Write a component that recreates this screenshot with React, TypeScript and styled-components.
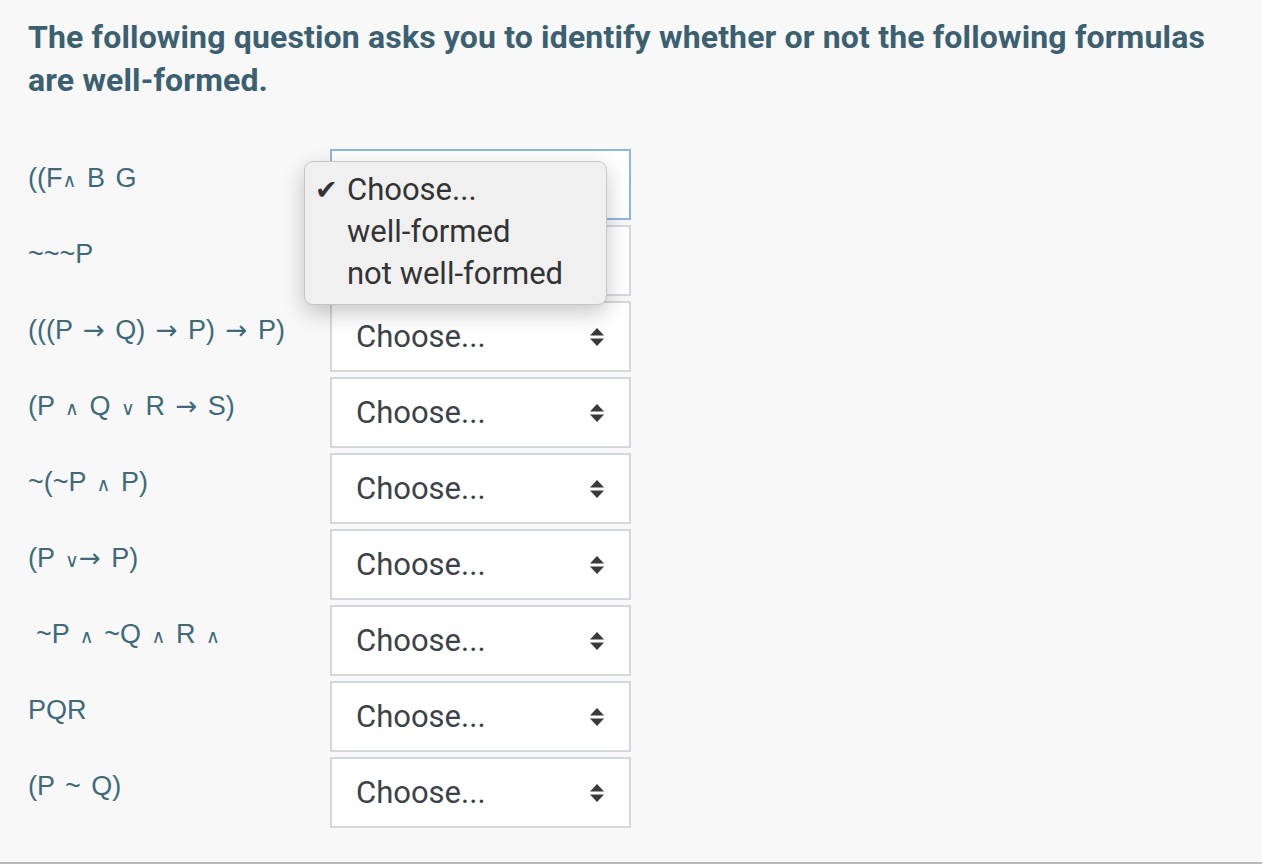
import React from "react";
import styled, { createGlobalStyle } from "styled-components";

const Global = createGlobalStyle`
  html, body { margin: 0; padding: 0; }
  body {
    background: #f8f8f8;
    font-family: Roboto, "Liberation Sans", Arial, sans-serif;
    width: 1262px;
    height: 864px;
    overflow: hidden;
  }
`;

const Page = styled.div`
  box-sizing: border-box;
  width: 1262px;
  height: 864px;
  padding: 16px 28px 0;
  border-bottom: 2px solid #b8b8b8;
  position: relative;
`;

const Heading = styled.h1`
  margin: 0 0 47px;
  font-size: 32px;
  line-height: 43px;
  font-weight: 700;
  letter-spacing: 0.15px;
  color: #3b6070;
`;

const List = styled.div`
  display: flex;
  flex-direction: column;
  gap: 5px;
`;

const Row = styled.div`
  display: grid;
  grid-template-columns: 302px 301px;
  align-items: start;
  position: relative;
`;

const Formula = styled.div<{ $indent?: number }>`
  font-family: "Liberation Sans", Arial, sans-serif;
  font-size: 27px;
  line-height: 30px;
  word-spacing: 3px;
  color: #3e6a79;
  padding-top: 14px;
  padding-left: ${(p) => p.$indent ?? 0}px;
  white-space: pre;
`;

const Op = styled.span`
  font-family: "DejaVu Sans", sans-serif;
  font-size: 19px;
`;

const Arrow = styled.span`
  font-family: "DejaVu Sans", sans-serif;
  font-size: 26px;
`;

const SelectBox = styled.div<{ $focused?: boolean }>`
  box-sizing: border-box;
  height: 71px;
  background: #fff;
  border: 2px solid ${(p) => (p.$focused ? "#8ab7e8" : "#d3d8dc")};
  display: flex;
  align-items: center;
  justify-content: space-between;
  padding: 0 24px 0 24px;
  font-size: 31px;
  color: #3d4247;
`;

const Menu = styled.div`
  position: absolute;
  left: 276px;
  top: 12px;
  width: 303px;
  box-sizing: border-box;
  height: 144px;
  background: #f0f0f0;
  border: 1px solid #c6c6c6;
  border-radius: 9px;
  box-shadow: 0 8px 22px rgba(0, 0, 0, 0.22);
  padding: 7px 0;
  z-index: 5;
`;

const MenuItem = styled.div`
  display: flex;
  align-items: center;
  height: 42px;
  line-height: 36px;
  font-size: 31px;
  color: #333;
`;

const Check = styled.span`
  width: 42px;
  padding-left: 10px;
  box-sizing: border-box;
  font-family: "DejaVu Sans", sans-serif;
  font-size: 27px;
  line-height: 30px;
  color: #333;
`;

const Arrows = () => (
  <svg width="16" height="20" viewBox="0 0 16 20">
    <path d="M8 1 L15 8.5 H1 Z" fill="#3a3a3a" />
    <path d="M8 19 L15 11.5 H1 Z" fill="#3a3a3a" />
  </svg>
);

const A = () => <Arrow>→</Arrow>;

const rows: { label: React.ReactNode; indent?: number }[] = [
  { label: <>((F<Op>∧</Op> B G</> },
  { label: <>~~~P</> },
  { label: <>(((P <A /> Q) <A /> P) <A /> P)</> },
  { label: <>(P <Op>∧</Op> Q <Op>∨</Op> R <A /> S)</> },
  { label: <>~(~P <Op>∧</Op> P)</> },
  { label: <>(P <Op>∨</Op><A /> P)</> },
  { label: <>~P <Op>∧</Op> ~Q <Op>∧</Op> R <Op>∧</Op></>, indent: 8 },
  { label: <>PQR</> },
  { label: <>(P ~ Q)</> },
];

export default function App() {
  return (
    <>
      <Global />
      <Page>
        <Heading>
          The following question asks you to identify whether or not the following formulas are well-formed.
        </Heading>
        <List>
          {rows.map((r, i) => (
            <Row key={i}>
              <Formula $indent={r.indent}>{r.label}</Formula>
              {i === 0 ? (
                <SelectBox $focused />
              ) : (
                <SelectBox>
                  <span>Choose...</span>
                  <Arrows />
                </SelectBox>
              )}
              {i === 0 && (
                <Menu>
                  <MenuItem>
                    <Check>✔</Check>Choose...
                  </MenuItem>
                  <MenuItem>
                    <Check />well-formed
                  </MenuItem>
                  <MenuItem>
                    <Check />not well-formed
                  </MenuItem>
                </Menu>
              )}
            </Row>
          ))}
        </List>
      </Page>
    </>
  );
}
